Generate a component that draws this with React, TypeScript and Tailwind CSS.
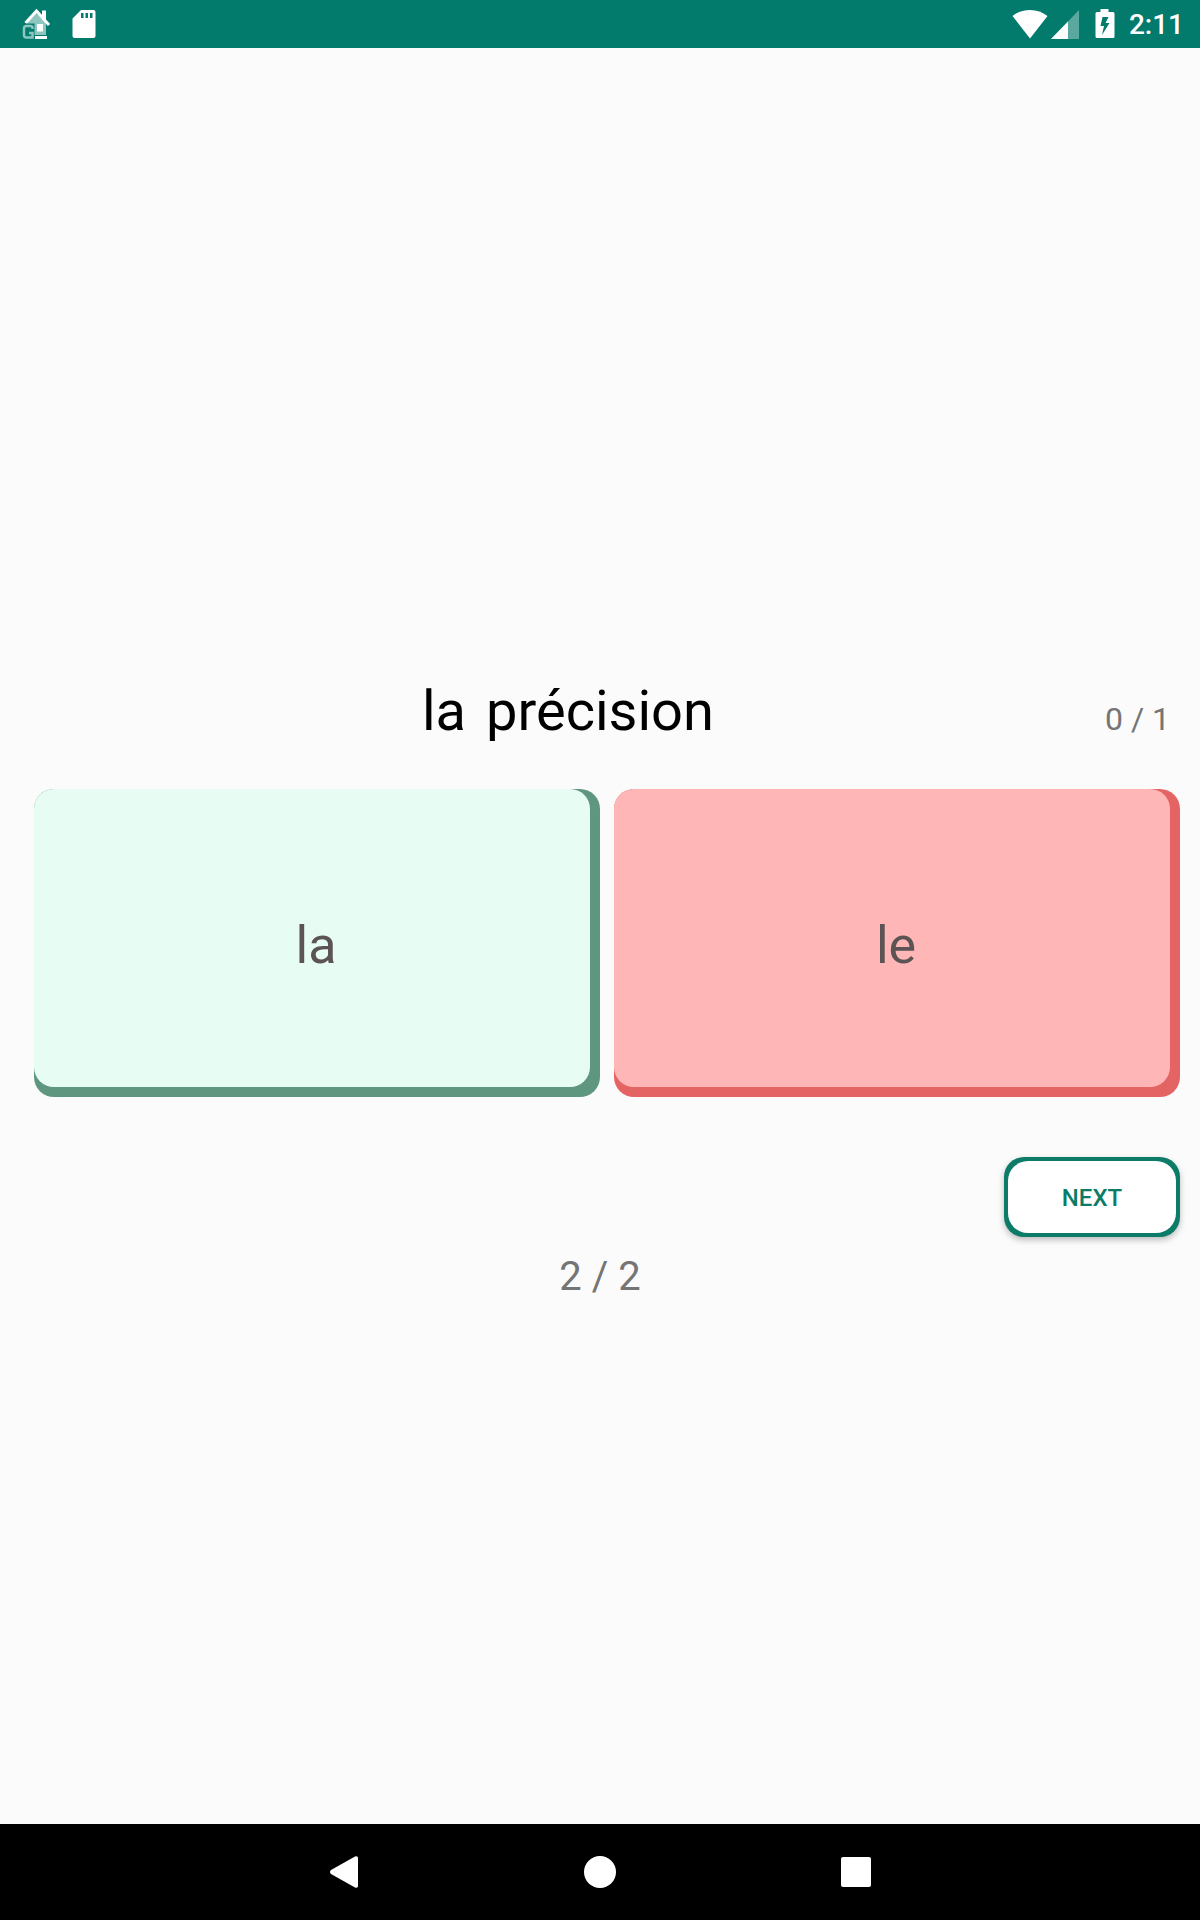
import { useState } from 'react';

interface Choice {
  label: string;
  face: string;
  edge: string;
}

const choices: Choice[] = [
  { label: 'la', face: 'bg-[#e7fdf4]', edge: 'bg-[#5f967f]' },
  { label: 'le', face: 'bg-[#ffb6b6]', edge: 'bg-[#e46464]' },
];

function StatusBar() {
  return (
    <header className="flex h-12 shrink-0 items-center justify-between bg-[#027a6c] pr-4 pl-5 text-white">
      <div className="flex items-center gap-5">
        <svg viewBox="0 0 32 32" className="size-8" aria-hidden="true">
          <path d="M7 14 16 5l10 9v13H7z" fill="#8ec5be" />
          <path d="M22 2.500h4v9h-4z" fill="#fff" />
          <path d="M5.500 15 16.500 3 29 17" fill="none" stroke="#fff" strokeWidth="3" />
          <path d="M17 16h6v7.500h-6z" fill="#fff" />
          <path d="M15 28h12v3H15z" fill="#fff" />
          <path d="M3.500 15.500h11v16h-11z" fill="#027a6c" />
          <path
            d="M12.500 21V20q0-2-2-2h-4q-2.500 0-2.500 2.500v6.500q0 2.500 2.500 2.500h6V25H9"
            fill="none"
            stroke="#8ec5be"
            strokeWidth="2.500"
          />
        </svg>
        <svg viewBox="0 0 24 28" className="h-7 w-6" aria-hidden="true">
          <path
            d="M9 0h12.500Q23.500 0 23.500 2v24q0 2-2 2h-19q-2 0-2-2V8.500zM9 3v5h2.500V3zm4.500 0v5H16V3zM18 3v5h2.500V3z"
            fill="#fff"
            fillRule="evenodd"
          />
        </svg>
      </div>
      <div className="flex items-center">
        <svg viewBox="0 0 36 30" className="mr-[3px] h-[30px] w-9" aria-hidden="true">
          <path d="M.5 7Q8 1 18 1t17.500 6L18 29.500z" fill="#fff" />
        </svg>
        <svg viewBox="0 0 28 30" className="mr-4 h-[30px] w-7" aria-hidden="true">
          <path d="M28 1v29H0z" fill="#fff" fillOpacity="0.35" />
          <path d="M17 12.500V30H0z" fill="#fff" />
        </svg>
        <svg viewBox="0 0 20 30" className="mr-[14px] h-[30px] w-5" aria-hidden="true">
          <path
            d="M5.500 0h8v3H18q1.500 0 1.500 1.500v23q0 1.500-1.500 1.500H2Q.5 29 .5 27.500v-23Q.5 3 2 3h3.500zM7.500 8 5.500 17h3.500l-2 9 7.500-12h-4l3-6z"
            fill="#fff"
            fillRule="evenodd"
          />
        </svg>
        <span className="pt-0.5 text-[28px] leading-8 font-medium">2:11</span>
      </div>
    </header>
  );
}

function ChoiceButton({ choice, onPick }: { choice: Choice; onPick: () => void }) {
  return (
    <button
      type="button"
      onClick={onPick}
      className={`${choice.edge} flex h-[308px] rounded-[20px] pr-[10px] pb-[10px] text-[52px] text-[#5c5454]`}
    >
      <span className={`${choice.face} flex h-full w-full items-center justify-center rounded-[20px] pt-4 pl-2`}>
        {choice.label}
      </span>
    </button>
  );
}

function NavBar() {
  return (
    <nav className="flex h-24 shrink-0 items-center justify-center bg-black">
      <button type="button" aria-label="Back" className="flex h-full w-64 items-center justify-center">
        <svg viewBox="0 0 32 32" className="size-8" aria-hidden="true">
          <path d="M27 .5Q30 -.5 30 2v28q0 2.500-3 1.500L3 18q-2-2 0-4z" fill="#fff" />
        </svg>
      </button>
      <button type="button" aria-label="Home" className="flex h-full w-64 items-center justify-center">
        <span className="size-8 rounded-full bg-white" />
      </button>
      <button type="button" aria-label="Overview" className="flex h-full w-64 items-center justify-center">
        <span className="size-[30px] rounded-xs bg-white" />
      </button>
    </nav>
  );
}

export default function App() {
  const [, setPicked] = useState<string | null>(null);

  return (
    <div className="flex min-h-screen flex-col bg-[#fbfbfb] font-[Roboto,sans-serif]">
      <StatusBar />
      <main className="flex flex-1 flex-col justify-center pt-[102px] pr-5 pl-[34px]">
        <div className="mb-10 flex items-center">
          <h1 className="flex flex-1 justify-center gap-5 text-[56px] leading-[76px] text-black">
            <span>la</span>
            <span>précision</span>
          </h1>
          <p className="pt-4 pr-[10px] pl-[3px] text-[32px] leading-10 text-[#757575]">0 / 1</p>
        </div>

        <div className="grid grid-cols-2 gap-[14px]">
          {choices.map((choice) => (
            <ChoiceButton key={choice.label} choice={choice} onPick={() => setPicked(choice.label)} />
          ))}
        </div>

        <button
          type="button"
          className="mt-[60px] h-20 w-44 self-end rounded-[20px] bg-[#0c7b67] p-1 text-2xl font-medium text-[#0c7b67] shadow-[0_3px_6px_rgba(0,0,0,0.25)]"
        >
          <span className="flex h-full items-center justify-center rounded-[20px] bg-white pt-0.5">NEXT</span>
        </button>

        <p className="mt-4 mr-[14px] text-center text-[40px] leading-12 text-[#757575]">2 / 2</p>
      </main>
      <NavBar />
    </div>
  );
}
